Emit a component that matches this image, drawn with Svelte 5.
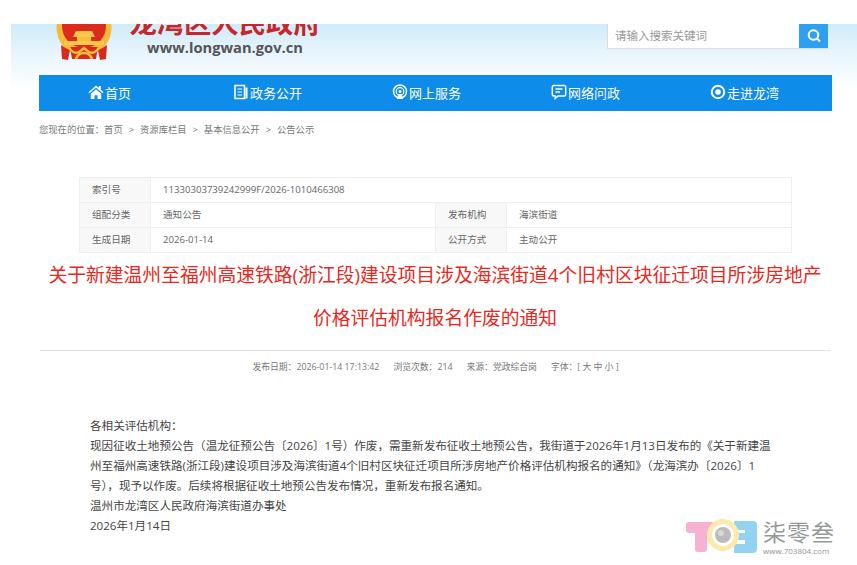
<script>
	const nav = [
		{ label: '首页', icon: 'home' },
		{ label: '政务公开', icon: 'doc' },
		{ label: '网上服务', icon: 'signal' },
		{ label: '网络问政', icon: 'chat' },
		{ label: '走进龙湾', icon: 'eye' }
	];
	const crumbs = ['首页', '资源库栏目', '基本信息公开', '公告公示'];
</script>

<div class="page">
	<div class="top">
		<header class="head">
			<svg class="emblem" width="60" height="62" viewBox="0 0 60 62">
				<circle cx="29" cy="27" r="27.500" fill="#f4bb3a" />
				<circle cx="29" cy="25" r="22" fill="#dc2a1e" />
				<path d="M18 36l3-6h16l3 6z" fill="#f8c84a" />
				<path d="M22 36h14v4H22z" fill="#f6bf3c" />
				<path d="M9 40h40v4H9z" fill="#f8c84a" />
				<path d="M6 44q4 3 9 5l-2 10-6-1zM52 44q-4 3-9 5l2 10 6-1z" fill="#d52a1c" />
				<path d="M15 46h28l-2 12H17z" fill="#d52a1c" />
				<path d="M13 45q5 9 11 6q3-2 5-4q2 2 5 4q6 3 11-6" fill="none" stroke="#f4bb3a" stroke-width="2.500" />
				<path d="M21 58q2-6 8-6t8 6" fill="none" stroke="#f4bb3a" stroke-width="2.500" />
			</svg>
			<div class="brand">
				<div class="brand-name">龙湾区人民政府</div>
				<div class="brand-url">www.longwan.gov.cn</div>
			</div>
			<div class="search">
				<span class="search-input">请输入搜索关键词</span>
				<span class="search-btn">
					<svg width="16" height="16" viewBox="0 0 16 16" fill="none" stroke="#fff" stroke-width="2">
						<circle cx="7.500" cy="7" r="4.800" />
						<path d="M11 10.500l3 3" />
					</svg>
				</span>
			</div>
		</header>

		<nav class="nav">
			{#each nav as item}
				<a class="nav-item" href="#top">
					<svg width="16" height="16" viewBox="0 0 16 16">
						{#if item.icon === 'home'}
							<path d="M8 1.500L0.500 8.200l1 1L8 3.600l6.500 5.600 1-1L12.800 5.800V2h-2v2.100z" fill="#fff" />
							<path d="M2.800 9.800L8 5.200l5.200 4.600V15H9.500v-3.800h-3V15H2.800z" fill="#fff" />
						{:else if item.icon === 'doc'}
							<path d="M2 1.500h9.500v13H2z" fill="none" stroke="#fff" stroke-width="1.600" />
							<path d="M4.500 5h4.500M4.500 8h4.500M4.500 11h4.500" stroke="#fff" stroke-width="1.200" />
							<path d="M12.500 3.500h2v11h-2z" fill="#fff" />
						{:else if item.icon === 'signal'}
							<circle cx="8" cy="7.500" r="6.500" fill="none" stroke="#fff" stroke-width="1.500" />
							<circle cx="8" cy="7.500" r="3.800" fill="none" stroke="#fff" stroke-width="1.200" />
							<circle cx="8" cy="7.500" r="1.500" fill="#fff" />
							<path d="M5 15l1.500-5h3L11 15z" fill="#fff" />
						{:else if item.icon === 'chat'}
							<path d="M2.800 1.500h10.400a1.500 1.500 0 0 1 1.500 1.500v7.500a1.500 1.500 0 0 1-1.500 1.500H7l-2.800 2.500V12H2.800a1.500 1.500 0 0 1-1.500-1.500V3a1.500 1.500 0 0 1 1.500-1.500z" fill="none" stroke="#fff" stroke-width="1.500" />
							<path d="M4.500 5h7M4.500 8h4.500" stroke="#fff" stroke-width="1.300" />
						{:else}
							<circle cx="8" cy="8" r="6.200" fill="none" stroke="#fff" stroke-width="2" />
							<circle cx="8" cy="8" r="2.800" fill="#fff" />
						{/if}
					</svg>
					<span>{item.label}</span>
				</a>
			{/each}
		</nav>
	</div>

	<div class="crumbs">
		<span class="here">您现在的位置：</span>
		{#each crumbs as c, i}
			{#if i > 0}<span class="sep">&gt;</span>{/if}
			<span>{c}</span>
		{/each}
	</div>

	<table class="info">
		<colgroup>
			<col class="c-label" />
			<col class="c-value" />
			<col class="c-label" />
			<col class="c-value" />
		</colgroup>
		<tbody>
			<tr>
				<th>索引号</th>
				<td colspan="3">11330303739242999F/2026-1010466308</td>
			</tr>
			<tr>
				<th>组配分类</th>
				<td>通知公告</td>
				<th>发布机构</th>
				<td>海滨街道</td>
			</tr>
			<tr>
				<th>生成日期</th>
				<td>2026-01-14</td>
				<th>公开方式</th>
				<td>主动公开</td>
			</tr>
		</tbody>
	</table>

	<h1 class="title">关于新建温州至福州高速铁路(浙江段)建设项目涉及海滨街道4个旧村区块征迁项目所涉房地产<br />价格评估机构报名作废的通知</h1>

	<div class="meta">
		<span>发布日期：2026-01-14 17:13:42</span>
		<span>浏览次数：214</span>
		<span>来源：党政综合岗</span>
		<span>字体：[ 大 中 小 ]</span>
	</div>

	<article class="body">
		<p>各相关评估机构：</p>
		<p>现因征收土地预公告（温龙征预公告〔2026〕1号）作废，需重新发布征收土地预公告，我街道于2026年1月13日发布的《关于新建温州至福州高速铁路(浙江段)建设项目涉及海滨街道4个旧村区块征迁项目所涉房地产价格评估机构报名的通知》（龙海滨办〔2026〕1号），现予以作废。后续将根据征收土地预公告发布情况，重新发布报名通知。</p>
		<p>温州市龙湾区人民政府海滨街道办事处</p>
		<p>2026年1月14日</p>
	</article>

	<div class="mark">
		<svg width="72" height="35" viewBox="0 0 72 35">
			<path d="M3 3h24v11h-6v16a3 3 0 0 1-3 3h-6a3 3 0 0 1-3-3V14H3a3 3 0 0 1-3-3V6a3 3 0 0 1 3-3z" fill="#f7a9cd" />
			<path d="M48 2h19a4 4 0 0 1 4 4v24a4 4 0 0 1-4 4H48v-9h11v-4H50v-7h9V11H48z" fill="#86cfef" />
			<circle cx="37" cy="16" r="16" fill="#fbe8a4" />
			<circle cx="37" cy="16" r="11" fill="#fff" />
			<circle cx="37" cy="16" r="8" fill="#b4b4b4" />
			<circle cx="35" cy="14" r="3" fill="#d6d6d6" />
		</svg>
		<div class="mark-text">
			<div class="mark-name">柒零叁</div>
			<div class="mark-url">www.703804.com</div>
		</div>
	</div>
</div>

<style>
	:global(body) {
		margin: 0;
		background: #fff;
	}

	.page {
		position: relative;
		width: 857px;
		height: 565px;
		overflow: hidden;
		padding-top: 24px;
		box-sizing: border-box;
		font-family: 'Open Sans', 'Noto Sans CJK SC', sans-serif;
		color: #555;
	}

	.top {
		margin-left: 11px;
		background: linear-gradient(#d0ebfa, #e8f5fc 30px, #fff 66px);
	}

	.head {
		display: flex;
		height: 51px;
		padding-left: 44px;
		overflow: hidden;
	}

	.emblem {
		flex: none;
		margin-top: -23px;
	}

	.brand {
		margin-left: 10px;
		width: 200px;
		text-align: center;
	}

	.brand-name {
		margin-top: -13px;
		font-size: 27.300px;
		line-height: 24px;
		font-weight: 700;
		color: #c5272a;
		white-space: nowrap;
	}

	.brand-url {
		font-size: 14.700px;
		line-height: 16px;
		font-weight: 700;
		color: #555;
		margin-top: 4px;
	}

	.search {
		display: flex;
		height: 24px;
		margin-left: 282px;
		border-bottom: 1px solid #dcdcdc;
		border-left: 1px solid #dcdcdc;
		background: #fff;
	}

	.search-input {
		width: 184px;
		padding-left: 7px;
		font-size: 11.500px;
		line-height: 24px;
		color: #999;
	}

	.search-btn {
		display: flex;
		width: 29px;
		align-items: center;
		justify-content: center;
		background: #2f9ff0;
	}

	.nav {
		display: flex;
		gap: 90px;
		height: 36px;
		margin: 0 25px 0 28px;
		padding-left: 49px;
		background: #0d8ce9;
	}

	.nav-item {
		display: flex;
		align-items: center;
		gap: 1px;
		padding-bottom: 2px;
		font-size: 13px;
		color: #fff;
		text-decoration: none;
	}

	.nav-item:first-child {
		margin-right: 12px;
	}

	.crumbs {
		display: flex;
		gap: 6px;
		margin: 12px 0 0 39px;
		font-size: 9.300px;
		line-height: 14px;
		color: #777;
	}

	.crumbs .here {
		margin-right: -6px;
	}

	.info {
		width: 712px;
		margin: 40px 0 0 79px;
		border-collapse: collapse;
		table-layout: fixed;
		font-size: 9.600px;
	}

	.c-label {
		width: 71px;
	}

	.c-value {
		width: 285px;
	}

	.info th,
	.info td {
		height: 22px;
		padding: 0 0 2px 12px;
		border: 1px solid #efefef;
		text-align: left;
		font-weight: 400;
		color: #666;
	}

	.info th {
		background: #f8f8f8;
	}

	.title {
		margin: 1px 0 0 13px;
		text-align: center;
		font-size: 18.800px;
		line-height: 43px;
		font-weight: 400;
		color: #e8281d;
		white-space: nowrap;
	}

	.meta {
		display: flex;
		justify-content: center;
		gap: 14px;
		margin: 10px 0 0 40px;
		width: 791px;
		padding-top: 9px;
		border-top: 1px solid #e2e2e2;
		font-size: 8.800px;
		line-height: 14px;
		color: #777;
	}

	.body {
		margin: 42px 0 0 90px;
		width: 684px;
		font-size: 11.570px;
		line-height: 20px;
		color: #444;
	}

	.body p {
		margin: 0;
	}

	.mark {
		position: absolute;
		left: 686px;
		top: 519px;
		display: flex;
		gap: 5px;
		opacity: 0.9;
	}

	.mark-name {
		font-size: 23px;
		line-height: 26px;
		letter-spacing: 1px;
		color: #8a8f8c;
	}

	.mark-url {
		margin-top: 1px;
		font-size: 8px;
		line-height: 9px;
		color: #888;
	}
</style>
